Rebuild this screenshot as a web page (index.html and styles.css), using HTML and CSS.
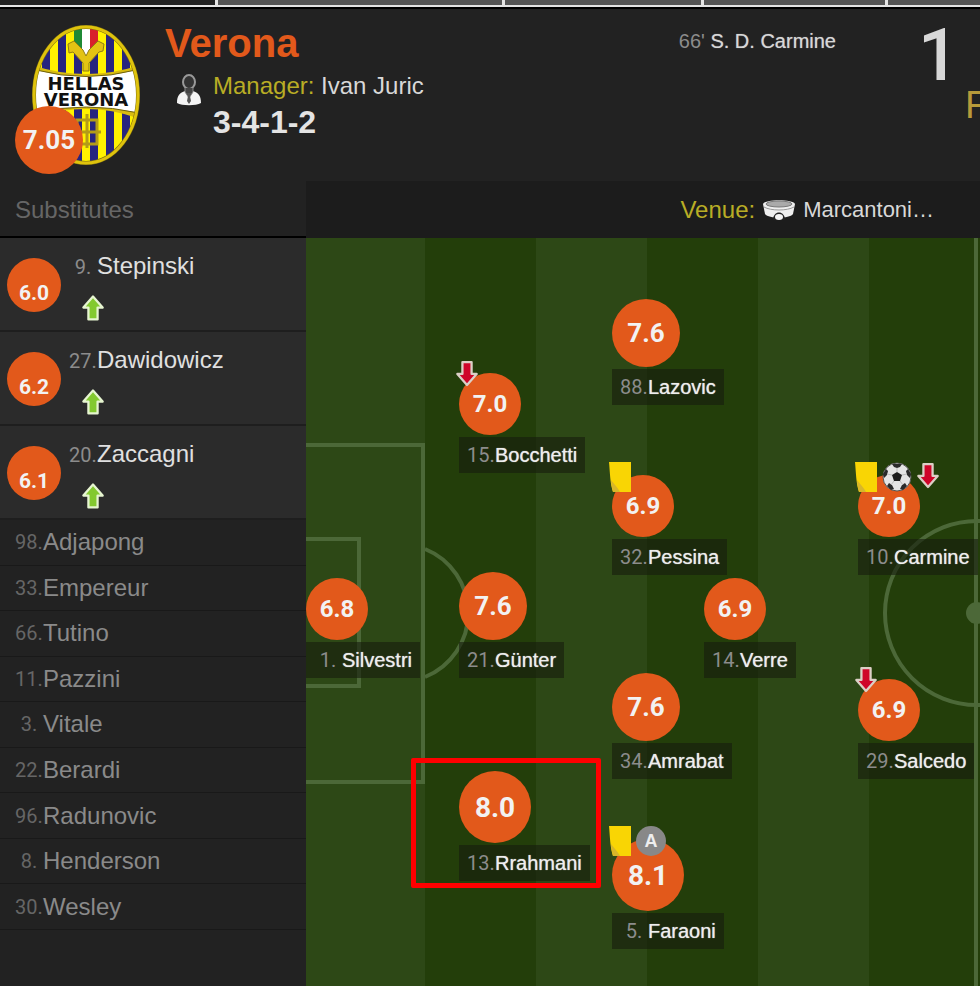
FILE: index.html
```html
<!DOCTYPE html>
<html lang="en">
<head>
<meta charset="UTF-8">
<meta name="viewport" content="width=device-width, initial-scale=1.0">
<title>Verona - Lineup</title>
<link rel="stylesheet" href="styles.css">
</head>
<body>
<!-- shared icons -->
<svg class="defs" width="0" height="0" aria-hidden="true">
  <symbol id="arrow" viewBox="0 0 24 28">
    <path d="M7 26.500V13.500H1.500L12 1.500L22.500 13.500H17V26.500Z" fill="#83c92f" stroke="#e6f5d0" stroke-width="2.500" stroke-linejoin="round"/>
  </symbol>
  <symbol id="off" viewBox="0 0 24 28">
    <path d="M7 1.500V14.500H1.500L12 26.500L22.500 14.500H17V1.500Z" fill="#cf0529" stroke="#dccfc6" stroke-width="2.500" stroke-linejoin="round"/>
  </symbol>
  <symbol id="card" viewBox="0 0 22 30">
    <path d="M0 0H22V30H4C1 21 1 10 0 0Z" fill="#f9d504"/>
    <path d="M2 18C5 22 9 26 11 30H4C3 26 2 22 2 18Z" fill="#d8b62a"/>
  </symbol>
  <symbol id="ball" viewBox="0 0 30 30">
    <circle cx="15" cy="15" r="14" fill="#e4e4e4" stroke="#555" stroke-width="1"/>
    <path d="M15 10L20 13L18 19H12L10 13Z" fill="#1d1d1d"/>
    <path d="M10 2L20 2L18 5L15 6L12 5Z M1 12L4 7L6 9L5 13L2 16Z M29 12L26 7L24 9L25 13L28 16Z M5 24L7 21L10 23L12 27L9 28Z M25 24L23 21L20 23L18 27L21 28Z" fill="#2a2a2a"/>
    <path d="M15 10V6M20 13L25 12M18 19L21 23M12 19L9 23M10 13L5 12" stroke="#bbb" stroke-width="1"/>
  </symbol>
</svg>

<nav class="tabs">
  <span class="tab tab-1"></span>
  <span class="tab tab-2"></span>
  <span class="tab tab-3"></span>
  <span class="tab tab-4"></span>
  <span class="tab tab-5"></span>
</nav>

<header class="header">
  <div class="crest">
    <svg width="108" height="140" viewBox="0 0 108 140" role="img" aria-label="Hellas Verona crest">
      <defs>
        <clipPath id="shield"><ellipse cx="54" cy="70" rx="52" ry="68"/></clipPath>
        <pattern id="stripes" width="16" height="140" patternUnits="userSpaceOnUse" x="2">
          <rect width="16" height="140" fill="#27247f"/>
          <rect width="8" height="140" fill="#fff200"/>
        </pattern>
      </defs>
      <g clip-path="url(#shield)">
        <rect width="108" height="140" fill="url(#stripes)"/>
        <path d="M42 0H50V24H42Z" fill="#1f8a35"/>
        <path d="M50 0H58V28L54 31L50 28Z" fill="#fff"/>
        <path d="M58 0H66V24H58Z" fill="#d8202b"/>
        <path d="M36 19L42 16L51 25L54 31L57 25L66 16L72 19L71 26L67 27L57 38V46H51V38L41 27L37 28Z" fill="#e3c313" stroke="#8f7c15" stroke-width="1"/>
        <path d="M0 40Q54 58 108 40V94Q54 74 0 94Z" fill="#d9bc10"/>
        <path d="M4 45Q54 58 104 45L107 88Q54 76 2 88Z" fill="#fff" stroke="#6d6010" stroke-width="1"/>
        <path d="M45 95H65V119H45ZM55 89V123M41 107H69" fill="none" stroke="#b39c18" stroke-width="3"/>
      </g>
      <ellipse cx="54" cy="70" rx="52" ry="68" fill="none" stroke="#7d6e10" stroke-width="4"/>
      <ellipse cx="54" cy="70" rx="52" ry="68" fill="none" stroke="#dfc30d" stroke-width="3"/>
      <text class="crest-name" x="54" y="65">HELLAS</text>
      <text class="crest-name" x="54" y="81">VERONA</text>
    </svg>
    <span class="rating rating-md crest-rating">7.05</span>
  </div>

  <div class="team">
    <h1>Verona</h1>
    <div class="manager">
      <svg width="26" height="32" viewBox="0 0 26 32" aria-hidden="true">
        <path d="M1 29C1 21 4 19 9 17L13 24L17 17C22 19 25 21 25 29C20 32 6 32 1 29Z" fill="#f4f4f4"/>
        <ellipse cx="13" cy="8" rx="6" ry="7" fill="#333" stroke="#999" stroke-width="2"/>
        <path d="M9 14V18L13 24L17 18V14" fill="#444" stroke="#888" stroke-width="1"/>
        <path d="M11 19H15L14 22L15 27L13 30L11 27L12 22Z" fill="#555"/>
      </svg>
      <span><span class="label">Manager:</span> Ivan Juric</span>
    </div>
    <div class="formation">3-4-1-2</div>
  </div>

  <div class="goals"><span class="minute">66'</span> S. D. Carmine</div>
  <div class="score">
    <div class="score-value">1</div>
    <div class="status">F</div>
  </div>
</header>

<main class="lineup">
  <aside class="sidebar">
    <h2>Substitutes</h2>
    <ul class="used">
      <li>
        <span class="rating rating-xs">6.0</span>
        <div class="sub-info">
          <div><span class="num">9.</span>Stepinski</div>
          <svg width="22" height="26"><use href="#arrow"/></svg>
        </div>
      </li>
      <li>
        <span class="rating rating-xs">6.2</span>
        <div class="sub-info">
          <div><span class="num">27.</span>Dawidowicz</div>
          <svg width="22" height="26"><use href="#arrow"/></svg>
        </div>
      </li>
      <li>
        <span class="rating rating-xs">6.1</span>
        <div class="sub-info">
          <div><span class="num">20.</span>Zaccagni</div>
          <svg width="22" height="26"><use href="#arrow"/></svg>
        </div>
      </li>
    </ul>
    <ul class="bench">
      <li><span class="num">98.</span>Adjapong</li>
      <li><span class="num">33.</span>Empereur</li>
      <li><span class="num">66.</span>Tutino</li>
      <li><span class="num">11.</span>Pazzini</li>
      <li><span class="num">3.</span>Vitale</li>
      <li><span class="num">22.</span>Berardi</li>
      <li><span class="num">96.</span>Radunovic</li>
      <li><span class="num">8.</span>Henderson</li>
      <li><span class="num">30.</span>Wesley</li>
    </ul>
  </aside>

  <section class="field">
    <div class="venue">
      <span class="label">Venue:</span>
      <svg width="32" height="22" viewBox="0 0 32 22" aria-hidden="true">
        <path d="M0 5C2 0 30 0 32 5L30 15C26 20 6 20 2 15Z" fill="#eee"/>
        <ellipse cx="16" cy="5" rx="13" ry="3" fill="#aaa" stroke="#777" stroke-width="1"/>
        <path d="M1 8C8 12 24 12 31 8" fill="none" stroke="#999" stroke-width="1"/>
        <path d="M10 21C10 11 22 11 22 21Z" fill="#222"/>
        <ellipse cx="16" cy="18" rx="4" ry="3" fill="#f4f4f4"/>
      </svg>
      <span class="venue-name">Marcantoni…</span>
    </div>

    <div class="pitch">
      <svg class="markings" width="780" height="748" aria-hidden="true">
        <path d="M0 207H117V544H0M0 301H53V448H0" />
        <path d="M119 311A69 69 0 0 1 119 439" />
        <path d="M670 0V748" />
        <circle cx="671" cy="375" r="92" />
        <circle class="spot" cx="671" cy="375" r="11" />
      </svg>

      <div class="player silvestri">
        <span class="rating rating-sm">6.8</span>
        <span class="name"><span class="num">1.</span>Silvestri</span>
      </div>
      <div class="player bocchetti">
        <span class="rating rating-sm">7.0</span>
        <span class="name"><span class="num">15.</span>Bocchetti</span>
        <div class="events">
          <svg width="22" height="27"><use href="#off"/></svg>
        </div>
      </div>
      <div class="player gunter">
        <span class="rating rating-md">7.6</span>
        <span class="name"><span class="num">21.</span>Günter</span>
      </div>
      <div class="player rrahmani">
        <span class="rating rating-lg">8.0</span>
        <span class="name"><span class="num">13.</span>Rrahmani</span>
      </div>
      <div class="player lazovic">
        <span class="rating rating-md">7.6</span>
        <span class="name"><span class="num">88.</span>Lazovic</span>
      </div>
      <div class="player pessina">
        <span class="rating rating-sm">6.9</span>
        <span class="name"><span class="num">32.</span>Pessina</span>
        <div class="events">
          <svg width="22" height="30"><use href="#card"/></svg>
        </div>
      </div>
      <div class="player amrabat">
        <span class="rating rating-md">7.6</span>
        <span class="name"><span class="num">34.</span>Amrabat</span>
      </div>
      <div class="player faraoni">
        <span class="rating rating-lg">8.1</span>
        <span class="name"><span class="num">5.</span>Faraoni</span>
        <div class="events">
          <svg width="22" height="30"><use href="#card"/></svg>
          <span class="assist">A</span>
        </div>
      </div>
      <div class="player verre">
        <span class="rating rating-sm">6.9</span>
        <span class="name"><span class="num">14.</span>Verre</span>
      </div>
      <div class="player carmine">
        <span class="rating rating-sm">7.0</span>
        <span class="name"><span class="num">10.</span>Carmine</span>
        <div class="events">
          <svg width="22" height="30"><use href="#card"/></svg>
          <svg width="30" height="30"><use href="#ball"/></svg>
          <svg width="22" height="27"><use href="#off"/></svg>
        </div>
      </div>
      <div class="player salcedo">
        <span class="rating rating-sm">6.9</span>
        <span class="name"><span class="num">29.</span>Salcedo</span>
        <div class="events">
          <svg width="22" height="27"><use href="#off"/></svg>
        </div>
      </div>

      <div class="highlight"></div>
    </div>
  </section>
</main>
</body>
</html>
```
FILE: styles.css
```css
* {
  box-sizing: border-box;
}

body {
  font-family: "Liberation Sans", Arial, sans-serif;
  font-size: 24px;
  background-color: #222;
  color: #d8d8d8;
  margin: 0;
  min-height: 100vh;
  display: flex;
  flex-direction: column;
  overflow-x: hidden;
}

h1, h2, ul {
  margin: 0;
  padding: 0;
}

ul {
  list-style: none;
}

svg {
  display: block;
  flex: none;
}

.defs {
  position: absolute;
}

/* bottom edge of the tab strip */
.tabs {
  display: flex;
  gap: 3px;
  height: 9px;
  background-color: #e4e4e4;
  border-bottom: 2px solid #000;
  padding-bottom: 2px;
}

.tab {
  background-color: #555;
}

.tab-1 {
  flex: 215;
  background-color: #222;
}

.tab-2 {
  flex: 283;
}

.tab-3 {
  flex: 196;
}

.tab-4 {
  flex: 181;
}

.tab-5 {
  flex: 92;
}

.header {
  display: flex;
  align-items: flex-start;
  height: 172px;
  padding-left: 32px;
  overflow: hidden;
}

.crest {
  position: relative;
  margin-top: 16px;
}

.crest-name {
  font-family: "DejaVu Sans", sans-serif;
  font-size: 18px;
  font-weight: bold;
  text-anchor: middle;
  fill: #111;
}

.crest-rating {
  position: absolute;
  left: -17px;
  top: 81px;
}

.team {
  margin: 11px 0 0 25px;
}

h1 {
  font-size: 40px;
  line-height: 46px;
  color: #e2591b;
}

.manager {
  display: flex;
  align-items: center;
  gap: 11px;
  padding-left: 11px;
  line-height: 40px;
}

.manager svg {
  margin-top: 8px;
}

.label {
  color: #b9ad25;
}

.formation {
  font-size: 32px;
  font-weight: bold;
  line-height: 32px;
  padding-left: 48px;
  color: #e4e4e4;
}

.goals {
  margin: 20px 79px 0 auto;
  font-size: 20px;
  line-height: 24px;
  text-shadow: 0 0 1px #999;
}

.minute {
  color: #8c8c8c;
  text-shadow: none;
}

.score {
  width: 65px;
  margin-top: 11px;
}

.score-value {
  font-family: Roboto, "Liberation Sans", sans-serif;
  font-size: 72px;
  font-weight: 500;
  line-height: 72px;
  padding-left: 3px;
}

.status {
  font-size: 38px;
  line-height: 26px;
  padding-left: 50px;
  color: #b89a3a;
}

.lineup {
  display: flex;
  flex: 1;
}

.sidebar {
  width: 306px;
  flex: none;
}

h2 {
  font-size: 24px;
  font-weight: normal;
  line-height: 53px;
  padding: 2px 0 0 15px;
  color: #666;
  border-bottom: 2px solid #000;
}

.num {
  display: inline-block;
  width: 28px;
  font-family: Roboto, "Liberation Sans", sans-serif;
  font-size: 20px;
  font-weight: normal;
  text-align: center;
  color: #8c8c8c;
  text-shadow: none;
}

.used li {
  display: flex;
  align-items: flex-start;
  height: 94px;
  padding-left: 7px;
  background-color: #2b2b2b;
  border-bottom: 2px solid #1e1e1e;
}

.used .rating {
  margin-top: 20px;
}

.sub-info {
  margin-left: 8px;
  padding-top: 14px;
  line-height: 28px;
  color: #e0e0e0;
}

.sub-info svg {
  margin: 14px 0 0 13px;
}

.bench {
  display: grid;
  grid-auto-rows: 1fr;
  height: 410px;
}

.bench li {
  display: flex;
  align-items: center;
  padding-left: 15px;
  color: #8a8a8a;
  border-bottom: 1px solid #191919;
}

.bench .num {
  color: #666;
}

.rating {
  display: flex;
  align-items: center;
  justify-content: center;
  flex: none;
  border-radius: 50%;
  background-color: #e2591b;
  color: #f2f2f2;
  font-family: Roboto, "Liberation Sans", sans-serif;
  font-weight: bold;
}

.rating-xs {
  width: 54px;
  height: 54px;
  padding-top: 15px;
  font-size: 21px;
}

.rating-sm {
  width: 62px;
  height: 62px;
  font-size: 24px;
}

.rating-md {
  width: 68px;
  height: 68px;
  font-size: 26px;
}

.rating-lg {
  width: 72px;
  height: 72px;
  font-size: 28px;
}

.field {
  display: flex;
  flex-direction: column;
  flex: 1;
  min-width: 0;
}

.venue {
  display: flex;
  align-items: center;
  justify-content: flex-end;
  gap: 8px;
  height: 57px;
  padding-right: 46px;
  background-color: #1c1c1c;
}

.venue-name {
  font-size: 22px;
}

.pitch {
  position: relative;
  flex: 1;
  min-height: 748px;
  overflow: hidden;
  background:
    linear-gradient(#2d4816, #2d4816) 0 0 / 8px 100% no-repeat,
    repeating-linear-gradient(to right, #2d4816 0 111px, #233e0a 111px 222px) 8px 0;
}

.markings {
  position: absolute;
  left: 0;
  top: 0;
  fill: none;
  stroke: #4c6838;
  stroke-width: 4px;
}

.spot {
  fill: #4c6838;
  stroke: none;
}

.player {
  position: absolute;
  display: flex;
  flex-direction: column;
  align-items: flex-start;
  gap: 2px;
}

.name {
  padding: 0 8px;
  font-size: 20px;
  line-height: 36px;
  color: #eee;
  background-color: rgba(22, 28, 14, 0.6);
  text-shadow: 0 0 1px #ccc;
  white-space: nowrap;
}

.events {
  position: absolute;
  left: -3px;
  top: -13px;
  display: flex;
  gap: 5px;
}

.assist {
  width: 30px;
  height: 30px;
  border-radius: 50%;
  background-color: #888;
  color: #eee;
  font-size: 18px;
  font-weight: bold;
  line-height: 30px;
  text-align: center;
}

/* places on the pitch */
.silvestri { left: 0; top: 340px; }
.bocchetti { left: 153px; top: 135px; }
.gunter { left: 153px; top: 334px; }
.rrahmani { left: 153px; top: 533px; }
.lazovic { left: 306px; top: 61px; }
.pessina { left: 306px; top: 237px; }
.amrabat { left: 306px; top: 435px; }
.faraoni { left: 306px; top: 601px; }
.verre { left: 398px; top: 340px; }
.carmine { left: 552px; top: 237px; }
.salcedo { left: 552px; top: 441px; }

.highlight {
  position: absolute;
  left: 105px;
  top: 520px;
  width: 190px;
  height: 130px;
  border: 5px solid #f00;
  border-radius: 2px;
}
```
